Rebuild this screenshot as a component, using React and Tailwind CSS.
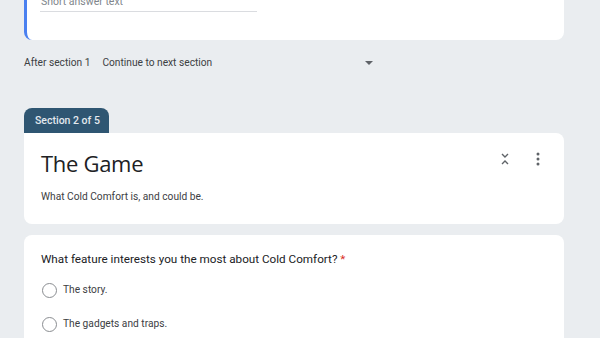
import React from "react";

function Radio({ label }) {
  return (
    <div className="flex items-center h-[34px]">
      <div className="w-[15px] h-[15px] rounded-full border-[1.5px] border-[#8a8d91] ml-[18px]"></div>
      <span className="ml-[6px] text-[10.2px] text-[#3c4043]">{label}</span>
    </div>
  );
}

export default function App() {
  return (
    <div className="h-[338px] overflow-hidden bg-[#eaedf0] font-['Roboto',sans-serif]">
      <div className="ml-[24px] w-[540px]">
        {/* previous section, cut off at the top */}
        <div className="-mt-[24px] h-[64px] bg-white rounded-b-lg border-l-[3px] border-[#4a80f0] pl-[14px] pt-[19px]">
          <div className="text-[10.5px] leading-[14px] text-[#80868b]">Short answer text</div>
          <div className="mt-[2px] -ml-[1px] w-[217px] h-px bg-[#dadce0]"></div>
        </div>

        <div className="flex items-center h-[43px] pt-[3px] text-[10.2px] text-[#3c4043]">
          <span>After section 1</span>
          <span className="ml-[12px] w-[262px]">Continue to next section</span>
          <svg width="10" height="6" viewBox="0 0 10 6"><path d="M1 1h8L5 5z" fill="#5f6368" /></svg>
        </div>

        <div className="mt-[25px] w-[85px] h-[25px] rounded-t-lg bg-[#2f5672] flex items-center pl-[11px] text-[10.5px] text-[#e3e9ee] font-medium">
          Section 2 of 5
        </div>
        <div className="h-[91px] bg-white rounded-b-lg rounded-tr-lg flex justify-between pl-[17px] pr-[24px]">
          <div>
            <div className="mt-[14px] text-[22px] leading-[32px] text-[#202124] font-['Open_Sans',sans-serif] tracking-[-0.3px]">The Game</div>
            <div className="mt-[10px] text-[10.2px] text-[#3c4043]">What Cold Comfort is, and could be.</div>
          </div>
          <div className="flex gap-[26px] mt-[19px] h-[16px] items-start">
            <svg width="10" height="14" viewBox="0 0 10 14" fill="none" stroke="#5f6368" strokeWidth="1.4">
              <path d="M2 2l3 3 3-3" />
              <path d="M2 12l3-3 3 3" />
            </svg>
            <svg width="4" height="14" viewBox="0 0 4 14" fill="#5f6368">
              <circle cx="2" cy="2" r="1.5" />
              <circle cx="2" cy="7" r="1.5" />
              <circle cx="2" cy="12" r="1.5" />
            </svg>
          </div>
        </div>

        <div className="mt-[11px] h-[140px] bg-white rounded-lg pt-[15px]">
          <div className="pl-[17px] text-[11.7px] text-[#202124] leading-[18px]">
            What feature interests you the most about Cold Comfort? <span className="text-[#d93025]">*</span>
          </div>
          <div className="mt-[5px]">
            <Radio label="The story." />
            <Radio label="The gadgets and traps." />
          </div>
        </div>
      </div>
    </div>
  );
}
